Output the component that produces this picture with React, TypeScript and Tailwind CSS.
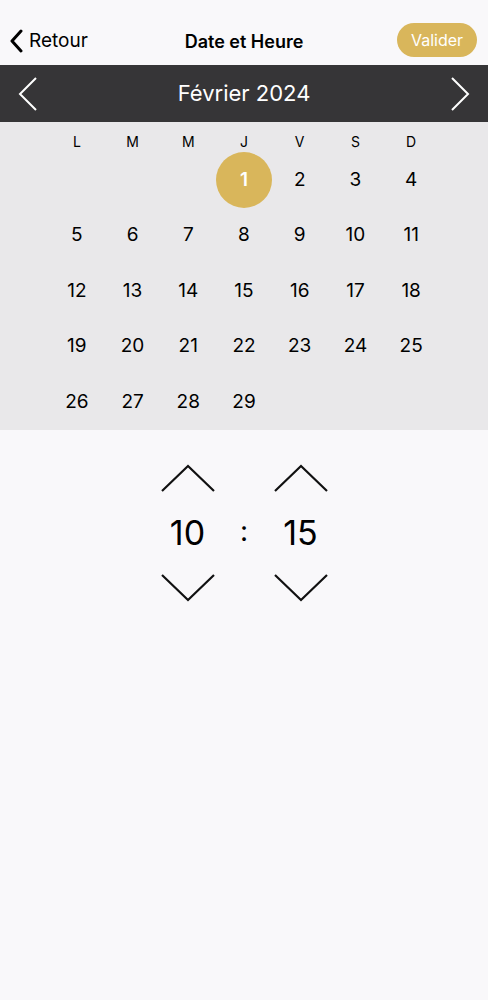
import { useState } from "react";

const GOLD = "bg-[#d9b65b]";
const weekDays = ["L", "M", "M", "J", "V", "S", "D"];

function ChevronUp() {
  return (
    <svg width="54" height="30" viewBox="0 0 54 30" fill="none">
      <path d="M1 28 L27 3 L53 28" stroke="#111" strokeWidth="2.2" />
    </svg>
  );
}

function ChevronDown() {
  return (
    <svg width="54" height="30" viewBox="0 0 54 30" fill="none">
      <path d="M1 2 L27 27 L53 2" stroke="#111" strokeWidth="2.2" />
    </svg>
  );
}

export default function App() {
  const [selected, setSelected] = useState(1);
  const [hour, setHour] = useState(10);
  const [minute, setMinute] = useState(15);

  // février 2024 commence un jeudi
  const cells: (number | null)[] = [null, null, null];
  for (let d = 1; d <= 29; d++) cells.push(d);

  return (
    <div
      className="min-h-screen bg-[#f9f8fa] text-black"
      style={{ fontFamily: "Inter, 'Noto Sans', sans-serif" }}
    >
      {/* En-tête */}
      <header className="relative flex h-[65px] items-center justify-between pl-[9px] pr-[11px] pt-[15px]">
        <button className="flex items-center gap-[6px] pt-[2px] text-[19px]">
          <svg width="14" height="24" viewBox="0 0 14 24" fill="none">
            <path d="M12 2 L3 12 L12 22" stroke="#000" strokeWidth="3" strokeLinecap="round" strokeLinejoin="round" />
          </svg>
          <span>Retour</span>
        </button>
        <h1 className="absolute left-1/2 top-[41px] -translate-x-1/2 -translate-y-1/2 text-[18px] font-semibold">
          Date et Heure
        </h1>
        <button className={`h-[34px] w-[80px] rounded-full ${GOLD} text-[16px] text-white`}>
          Valider
        </button>
      </header>

      {/* Mois */}
      <div className="flex h-[57px] items-center justify-between bg-[#363537] px-[18px] text-white">
        <svg width="20" height="36" viewBox="0 0 20 36" fill="none">
          <path d="M18 2 L2 18 L18 34" stroke="#fff" strokeWidth="2" />
        </svg>
        <span className="text-[22px]">Février 2024</span>
        <svg width="20" height="36" viewBox="0 0 20 36" fill="none">
          <path d="M2 2 L18 18 L2 34" stroke="#fff" strokeWidth="2" />
        </svg>
      </div>

      {/* Calendrier */}
      <div className="bg-[#e9e8ea] px-[49px]">
        <div className="grid h-[30px] grid-cols-7 items-end">
          {weekDays.map((w, i) => (
            <span key={i} className="text-center text-[14px] leading-[20px]">
              {w}
            </span>
          ))}
        </div>
        <div className="grid grid-cols-7">
          {cells.map((d, i) => (
            <div key={i} className="flex h-[55.6px] items-center justify-center">
              {d !== null && (
                <button
                  onClick={() => setSelected(d)}
                  className={`flex h-[56px] w-[56px] items-center justify-center rounded-full text-[19px] ${
                    selected === d ? `${GOLD} font-semibold text-white` : ""
                  }`}
                >
                  {d}
                </button>
              )}
            </div>
          ))}
        </div>
      </div>

      {/* Heure */}
      <div className="flex items-center justify-center gap-[15px] pt-[33px]">
        <div className="flex w-[56px] flex-col items-center">
          <button onClick={() => setHour((hour + 1) % 24)}>
            <ChevronUp />
          </button>
          <span className="my-[20px] text-[34px] leading-[40px]">{hour}</span>
          <button onClick={() => setHour((hour + 23) % 24)}>
            <ChevronDown />
          </button>
        </div>
        <span className="w-[27px] pb-[4px] text-center text-[28px]">:</span>
        <div className="flex w-[56px] flex-col items-center">
          <button onClick={() => setMinute((minute + 1) % 60)}>
            <ChevronUp />
          </button>
          <span className="my-[20px] text-[34px] leading-[40px]">
            {String(minute).padStart(2, "0")}
          </span>
          <button onClick={() => setMinute((minute + 59) % 60)}>
            <ChevronDown />
          </button>
        </div>
      </div>
    </div>
  );
}
